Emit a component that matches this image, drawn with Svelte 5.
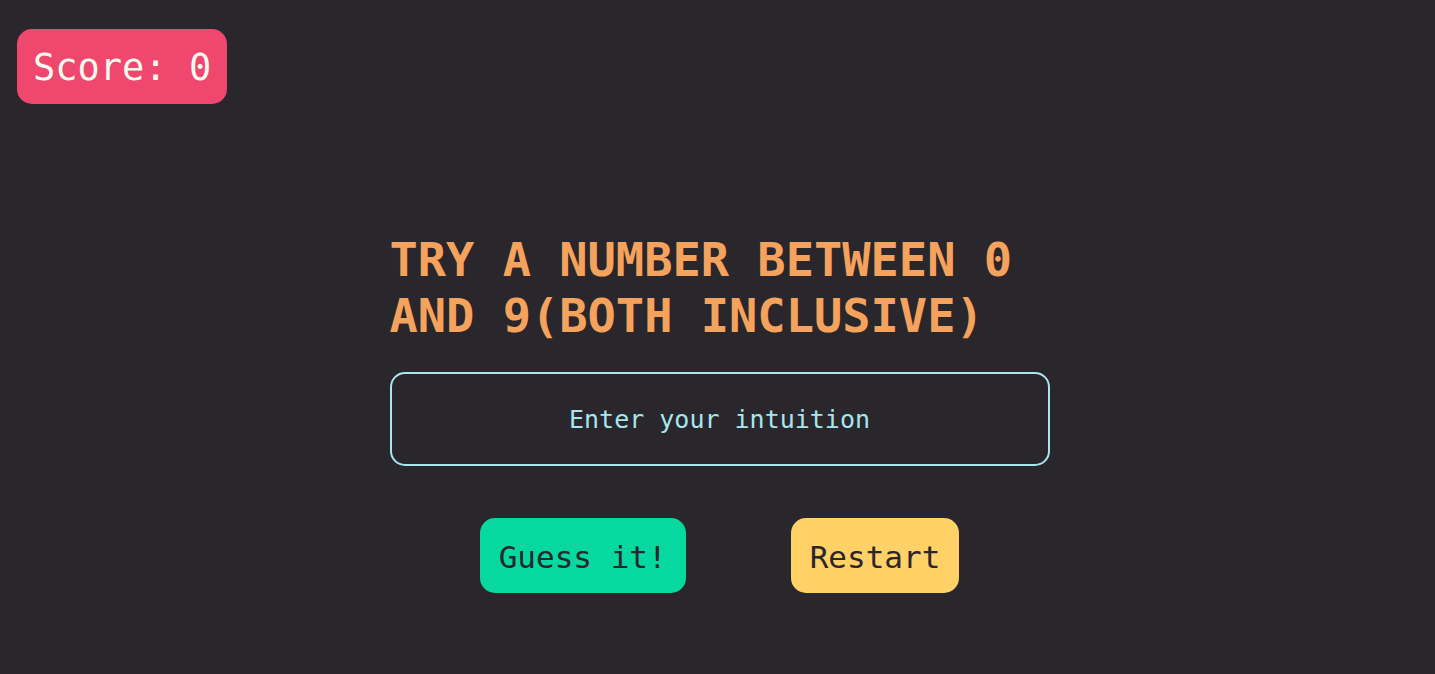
<script>
  let score = $state(0);
  let guess = $state('');
  let target = $state(pick());

  function pick() {
    return Math.floor(Math.random() * 10);
  }

  function submit(event) {
    event.preventDefault();
    if (guess.trim() === '') return;
    if (Number(guess) === target) {
      score += 1;
      target = pick();
    }
    guess = '';
  }

  function restart() {
    score = 0;
    guess = '';
    target = pick();
  }
</script>

<div class="page">
  <header>
    <p class="score">Score: {score}</p>
  </header>
  <main>
    <form onsubmit={submit}>
      <h1><label for="guess">TRY A NUMBER BETWEEN 0 AND 9(BOTH INCLUSIVE)</label></h1>
      <input id="guess" type="text" inputmode="numeric" autocomplete="off" placeholder="Enter your intuition" bind:value={guess} />
      <div class="actions">
        <button class="go" type="submit">Guess it!</button>
        <button class="restart" type="button" onclick={restart}>Restart</button>
      </div>
    </form>
  </main>
</div>

<style>
  :global(body) {
    margin: 0;
    background: #29262c;
  }

  .page {
    box-sizing: border-box;
    min-height: 100vh;
    padding: 29px 13px 29px 17px;
    color: #29262c;
    font-family: "DejaVu Sans Mono", monospace;
  }

  header {
    display: flex;
  }

  .score {
    margin: 0;
    padding: 3px 16px 0;
    border-radius: 15px;
    background: #f0476f;
    color: #f1faee;
    font-size: 37px;
    line-height: 72px;
  }

  main {
    display: flex;
    justify-content: center;
    padding-top: 128px;
  }

  form {
    width: 660px;
    max-width: 100%;
  }

  h1 {
    margin: 0 0 28px;
    color: #f5a25d;
    font-size: 47px;
    font-weight: 700;
    line-height: 56px;
  }

  input {
    box-sizing: border-box;
    display: block;
    width: 100%;
    height: 94px;
    padding: 0 16px;
    border: 2px solid #a8e6ef;
    border-radius: 15px;
    background: transparent;
    color: #a8e6ef;
    font-family: inherit;
    font-size: 25px;
    text-align: center;
  }

  input::placeholder {
    color: #a8e6ef;
    opacity: 1;
  }

  .actions {
    display: flex;
    flex-wrap: wrap;
    justify-content: center;
    gap: 24px 105px;
    margin-top: 52px;
  }

  button {
    padding: 3px 19px 0;
    border: 0;
    border-radius: 15px;
    color: inherit;
    font-family: inherit;
    font-size: 31px;
    line-height: 72px;
    cursor: pointer;
  }

  .go {
    background: #06d8a0;
  }

  .restart {
    background: #ffd166;
  }
</style>
